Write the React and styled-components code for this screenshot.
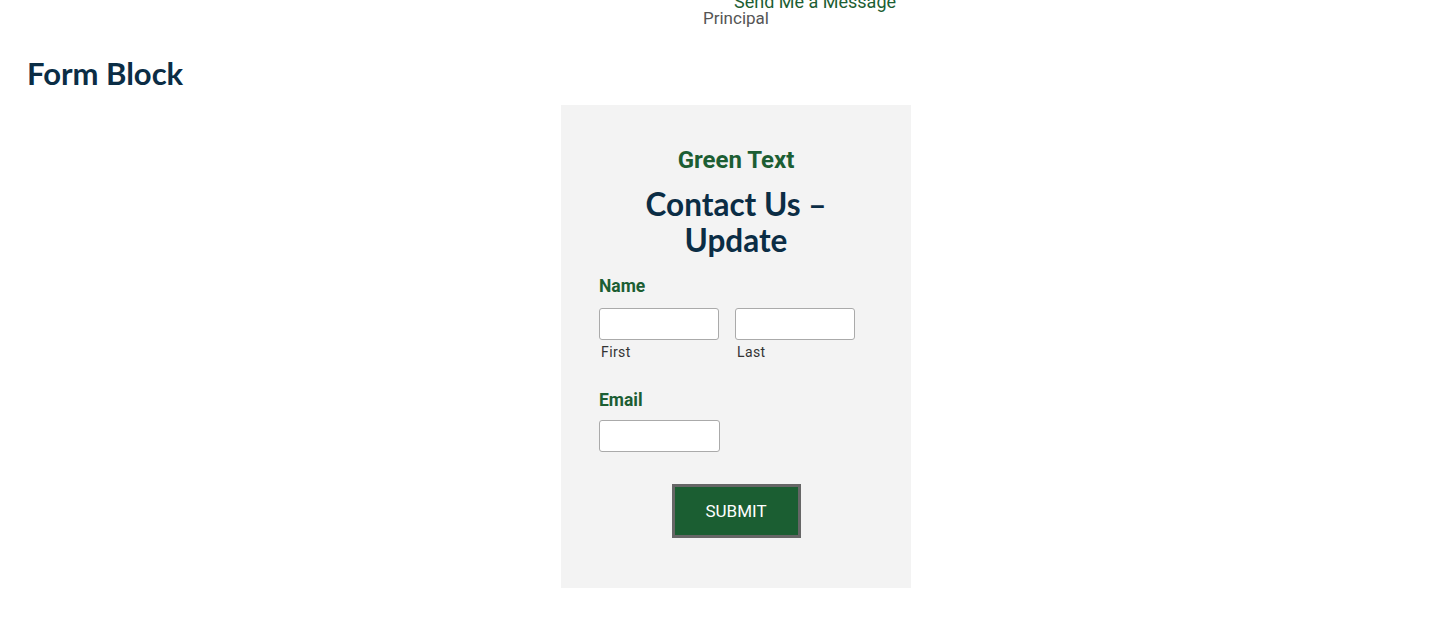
import styled, { createGlobalStyle } from "styled-components";

const GlobalStyle = createGlobalStyle`
  body {
    margin: 0;
    background: #ffffff;
    font-family: Roboto, "Liberation Sans", sans-serif;
  }
`;

// Barra superior con los enlaces superpuestos
const TopBar = styled.nav`
  position: relative;
  height: 44px;
`;

const TopLink = styled.a`
  position: absolute;
  left: ${(p) => p.$left}px;
  top: ${(p) => p.$top}px;
  font-family: Roboto, "Liberation Sans", sans-serif;
  font-size: ${(p) => p.$size || 17}px;
  line-height: 20px;
  color: ${(p) => p.$color};
  text-decoration: none;
  white-space: nowrap;
`;

const PageTitle = styled.h2`
  margin: 11px 0 14px 27px;
  font-family: Lato, "Noto Sans", sans-serif;
  font-weight: 700;
  font-size: 31px;
  line-height: 36px;
  color: #0b2d45;
`;

const Section = styled.section`
  display: flex;
  justify-content: center;
  padding-left: 20px;
`;

const Card = styled.form`
  width: 350px;
  box-sizing: border-box;
  background: #f3f3f3;
  padding: 40px 38px 50px;
  display: flex;
  flex-direction: column;
`;

const Eyebrow = styled.p`
  margin: 0;
  text-align: center;
  font-family: Roboto, "Liberation Sans", sans-serif;
  font-weight: 700;
  font-size: 24px;
  line-height: 30px;
  color: #1c5e33;
`;

const Heading = styled.h3`
  margin: 11px 0 17px;
  text-align: center;
  font-family: Lato, "Noto Sans", sans-serif;
  font-weight: 700;
  font-size: 31.5px;
  line-height: 36px;
  color: #0b2d45;
`;

const Label = styled.div`
  font-family: Roboto, "Liberation Sans", sans-serif;
  font-weight: 700;
  font-size: 17.5px;
  line-height: 22px;
  color: #1c5e33;
  margin-bottom: ${(p) => p.$space || 11}px;
`;

const Row = styled.div`
  display: flex;
  gap: 16px;
  margin-bottom: ${(p) => p.$gap || 0}px;
`;

const Field = styled.div`
  display: flex;
  flex-direction: column;
`;

const Input = styled.input`
  width: ${(p) => p.$width || 120}px;
  height: 32px;
  box-sizing: border-box;
  border: 1px solid #aaaaaa;
  border-radius: 3px;
  background: #ffffff;
  margin: 0;
`;

const SubLabel = styled.span`
  font-size: 14px;
  line-height: 18px;
  color: #333333;
  letter-spacing: 0.4px;
  margin-left: 2px;
  margin-top: 3px;
`;

const Submit = styled.button`
  align-self: center;
  margin-top: 32px;
  width: 129px;
  height: 54px;
  background: #1b5e32;
  border: 3px solid #666666;
  color: #ffffff;
  font-family: Roboto, "Liberation Sans", sans-serif;
  font-size: 17px;
  cursor: pointer;
`;

export default function App() {
  return (
    <>
      <GlobalStyle />
      <TopBar>
        <TopLink $left={734} $top={-8} $size={18} $color="#1c5e33">Send Me a Message</TopLink>
        <TopLink $left={703} $top={8} $color="#555555">Principal</TopLink>
      </TopBar>

      <PageTitle>Form Block</PageTitle>

      <Section>
        <Card onSubmit={(e) => e.preventDefault()}>
          <Eyebrow>Green Text</Eyebrow>
          <Heading>Contact Us –<br />Update</Heading>

          <Label>Name</Label>
          <Row $gap={28}>
            <Field>
              <Input />
              <SubLabel>First</SubLabel>
            </Field>
            <Field>
              <Input />
              <SubLabel>Last</SubLabel>
            </Field>
          </Row>

          <Label $space={9}>Email</Label>
          <Row>
            <Input $width={121} />
          </Row>

          <Submit type="submit">SUBMIT</Submit>
        </Card>
      </Section>
    </>
  );
}
